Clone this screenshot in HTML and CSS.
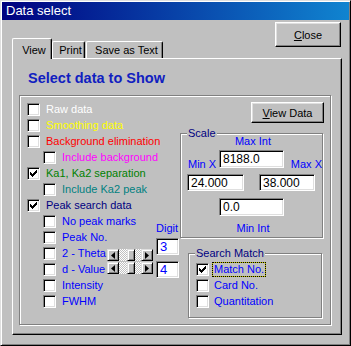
FILE: index.html
```html
<!DOCTYPE html>
<html lang="en">
<head>
  <meta charset="UTF-8">
  <title>Data select</title>
  <link rel="stylesheet" href="styles.css">
</head>
<body>

<div class="window">
  <div class="titlebar">Data select</div>

  <div class="client">
    <div class="head">
      <div class="tabs">
        <div class="tab tab-view active">View</div>
        <div class="tab tab-print">Print</div>
        <div class="tab tab-save">Save as Text</div>
      </div>
      <button class="btn close-btn"><u>C</u>lose</button>
    </div>

    <div class="panel">
      <h1 class="heading">Select data to Show</h1>

      <div class="group">
        <!-- left list of options -->
        <ul class="list">
          <li class="row"><span class="cb"></span><span class="c-white">Raw data</span></li>
          <li class="row"><span class="cb"></span><span class="c-yellow">Smoothing data</span></li>
          <li class="row"><span class="cb"></span><span class="c-red">Background elimination</span></li>
          <li class="row sub"><span class="cb"></span><span class="c-magenta">Include background</span></li>
          <li class="row"><span class="cb checked"><svg width="7" height="7" viewBox="0 0 7 7"><path d="M0 2h1v1h1v1h1V3h1V2h1V1h1V0h1v3H6v1H5v1H4v1H3v1H2V6H1V5H0z"/></svg></span><span class="c-green">Ka1, Ka2 separation</span></li>
          <li class="row sub"><span class="cb"></span><span class="c-teal">Include Ka2 peak</span></li>
          <li class="row"><span class="cb checked"><svg width="7" height="7" viewBox="0 0 7 7"><path d="M0 2h1v1h1v1h1V3h1V2h1V1h1V0h1v3H6v1H5v1H4v1H3v1H2V6H1V5H0z"/></svg></span><span class="c-navy">Peak search data</span></li>
          <li class="row sub"><span class="cb"></span><span class="c-blue">No peak marks</span></li>
          <li class="row sub"><span class="cb"></span><span class="c-blue">Peak No.</span></li>
          <li class="row sub"><span class="cb"></span><span class="c-blue">2 - Theta</span></li>
          <li class="row sub"><span class="cb"></span><span class="c-blue">d - Value</span></li>
          <li class="row sub"><span class="cb"></span><span class="c-blue">Intensity</span></li>
          <li class="row sub"><span class="cb"></span><span class="c-blue">FWHM</span></li>
        </ul>

        <!-- digit spinners for 2-Theta / d-Value -->
        <div class="digits">
          <div class="digit-label">Digit</div>
          <div class="spin spin-theta">
            <div class="hscroll">
              <span class="arr"><svg width="4" height="7" viewBox="0 0 4 7"><path d="M4 0v7L0 3.5z"/></svg></span>
              <span class="track t1"></span>
              <span class="thumb"></span>
              <span class="track t2"></span>
              <span class="arr"><svg width="4" height="7" viewBox="0 0 4 7"><path d="M0 0v7l4-3.5z"/></svg></span>
            </div>
            <input class="field digit" type="text" value="3">
          </div>
          <div class="spin spin-d">
            <div class="hscroll">
              <span class="arr"><svg width="4" height="7" viewBox="0 0 4 7"><path d="M4 0v7L0 3.5z"/></svg></span>
              <span class="track t1"></span>
              <span class="thumb"></span>
              <span class="track t2"></span>
              <span class="arr"><svg width="4" height="7" viewBox="0 0 4 7"><path d="M0 0v7l4-3.5z"/></svg></span>
            </div>
            <input class="field digit" type="text" value="4">
          </div>
        </div>

        <!-- right side: button, scale, search match -->
        <div class="side">
          <button class="btn view-btn"><u>V</u>iew Data</button>

          <div class="frame scale">
            <span class="legend">Scale</span>
            <div class="c-blue center-lbl">Max Int</div>
            <input class="field max-int" type="text" value="8188.0">
            <div class="x-labels c-blue"><span>Min X</span><span>Max X</span></div>
            <div class="x-inputs">
              <input class="field min-x" type="text" value="24.000">
              <input class="field max-x" type="text" value="38.000">
            </div>
            <input class="field min-int" type="text" value="0.0">
            <div class="c-blue center-lbl min-int-lbl">Min Int</div>
          </div>

          <div class="frame search">
            <span class="legend">Search Match</span>
            <ul class="list">
              <li class="row"><span class="cb checked"><svg width="7" height="7" viewBox="0 0 7 7"><path d="M0 2h1v1h1v1h1V3h1V2h1V1h1V0h1v3H6v1H5v1H4v1H3v1H2V6H1V5H0z"/></svg></span><span class="c-blue focus">Match No.</span></li>
              <li class="row"><span class="cb"></span><span class="c-blue nofocus">Card No.</span></li>
              <li class="row"><span class="cb"></span><span class="c-blue nofocus">Quantitation</span></li>
            </ul>
          </div>
        </div>
      </div>
    </div>
  </div>
</div>

</body>
</html>
```

FILE: styles.css
```css
body {
  margin: 0;
  background: #c0c0c0;
}
.window {
  width: 351px;
  height: 346px;
  box-sizing: border-box;
  background: #c0c0c0;
  border: 1px solid;
  border-color: #dfdfdf #000 #000 #dfdfdf;
  box-shadow: inset 1px 1px #fff, inset -1px -1px #808080;
  padding: 1px;
  font-family: "Liberation Sans", Arial, sans-serif;
  font-size: 11px;
}
.titlebar {
  height: 18px;
  line-height: 18px;
  padding-left: 4px;
  color: #fff;
  font-size: 13px;
  background: linear-gradient(to right, #000080, #1084d0);
}
.client {
  padding: 0 7px 0 10px;
}
.head {
  display: flex;
  justify-content: space-between;
  height: 38px;
}
.tabs {
  display: flex;
  align-items: flex-end;
  align-self: flex-end;
}
.tab {
  box-sizing: border-box;
  height: 17px;
  padding-top: 2px;
  padding-left: 4px;
  text-align: center;
  line-height: 13px;
  background: #c0c0c0;
  border-top: 1px solid #fff;
  border-left: 1px solid #fff;
  border-right: 1px solid #000;
  box-shadow: inset -1px 0 #808080;
  border-radius: 2px 2px 0 0;
}
.tab.active {
  position: relative;
  z-index: 1;
  height: 21px;
  padding-top: 5px;
  margin-bottom: -1px;
}
.tab-view { width: 40px; }
.tab-print { width: 33px; }
.tab-save { width: 77px; margin-left: 1px; }

.btn {
  box-sizing: border-box;
  font: inherit;
  color: #000;
  background: #c0c0c0;
  border: 1px solid;
  border-color: #fff #000 #000 #fff;
  box-shadow: inset -1px -1px #808080, inset 1px 1px #dfdfdf;
  padding: 0;
  text-align: center;
}
.close-btn {
  width: 66px;
  height: 25px;
  margin-top: 2px;
  margin-right: 1px;
}

.panel {
  box-sizing: border-box;
  height: 277px;
  border: 1px solid;
  border-color: #fff #000 #000 #fff;
  box-shadow: inset -1px -1px #808080;
  padding-left: 6px;
}
.heading {
  margin: 11px 0 0 9px;
  font-size: 14.5px;
  line-height: 17px;
  font-weight: bold;
  color: #1020c0;
}
.group {
  box-sizing: border-box;
  width: 312px;
  height: 230px;
  margin-top: 8px;
  border: 1px solid #808080;
  box-shadow: inset 1px 1px #fff, 1px 1px #fff;
  padding: 5px 0 0 7px;
  display: grid;
  grid-template-columns: 80px 73px 144px;
  align-items: start;
}
.list {
  list-style: none;
  margin: 0;
  padding: 0;
}
.group > .list {
  grid-column: 1 / 3;
  grid-row: 1;
}
.row {
  display: flex;
  align-items: center;
  height: 16px;
  white-space: nowrap;
}
.row.sub {
  padding-left: 16px;
}
.cb {
  box-sizing: border-box;
  width: 13px;
  height: 13px;
  flex: none;
  margin-right: 6px;
  background: #fff;
  border: 1px solid;
  border-color: #808080 #fff #fff #808080;
  box-shadow: inset 1px 1px #000, inset -1px -1px #dfdfdf;
  padding: 2px 0 0 2px;
}
.cb svg {
  display: block;
  fill: #000;
  shape-rendering: crispEdges;
}

.c-white { color: #fff; }
.c-yellow { color: #ffff00; }
.c-red { color: #ff0000; }
.c-magenta { color: #ff00ff; }
.c-green { color: #008000; }
.c-teal { color: #008080; }
.c-navy { color: #000080; }
.c-blue { color: #0000ff; }

.digits {
  grid-column: 2;
  grid-row: 1;
  position: relative;
}
.digit-label {
  margin: 121px 0 0 49px;
  line-height: 13px;
  color: #0000ff;
}
.spin {
  display: flex;
  align-items: flex-start;
  gap: 3px;
}
.spin-theta { margin-top: 3px; }
.spin-theta .hscroll { margin-top: 11px; }
.spin-d .hscroll { margin-top: 1px; }
.hscroll {
  display: flex;
  height: 12px;
  width: 46px;
}
.arr, .thumb {
  box-sizing: border-box;
  height: 12px;
  background: #c0c0c0;
  border: 1px solid;
  border-color: #dfdfdf #000 #000 #dfdfdf;
  box-shadow: inset 1px 1px #fff, inset -1px -1px #808080;
  display: flex;
  align-items: center;
  justify-content: center;
}
.arr { width: 12px; }
.arr svg { fill: #000; }
.thumb { width: 8px; }
.track {
  height: 12px;
  background: repeating-conic-gradient(#fff 0 25%, #c0c0c0 0 50%) 0 0 / 2px 2px;
}
.t1 { width: 8px; }
.t2 { width: 6px; }

.field {
  box-sizing: border-box;
  font: inherit;
  font-size: 12px;
  color: #000;
  background: #fff;
  border: 1px solid;
  border-color: #808080 #fff #fff #808080;
  box-shadow: inset 1px 1px #000, inset -1px -1px #dfdfdf;
  padding: 0 0 0 3px;
  margin: 0;
  outline: none;
  display: block;
}
.digit {
  width: 23px;
  height: 17px;
  font-size: 13px;
  color: #0000ff;
}

.side {
  grid-column: 3;
  grid-row: 1;
}
.view-btn {
  display: block;
  width: 73px;
  height: 21px;
  margin: 1px 0 0 71px;
}
.frame {
  position: relative;
  box-sizing: border-box;
  border: 1px solid #808080;
  box-shadow: inset 1px 1px #fff, 1px 1px #fff;
}
.legend {
  position: absolute;
  top: -8px;
  left: 6px;
  padding: 0 1px;
  line-height: 14px;
  background: #c0c0c0;
  color: #000080;
}
.scale {
  width: 143px;
  height: 105px;
  margin-top: 10px;
}
.center-lbl {
  text-align: center;
  line-height: 14px;
  padding-left: 3px;
}
.max-int, .min-int {
  width: 65px;
  height: 18px;
  margin-left: 38px;
}
.max-int { margin-top: 2px; }
.x-labels {
  display: flex;
  justify-content: space-between;
  margin-top: -11px;
  padding-left: 7px;
  line-height: 14px;
}
.x-inputs {
  display: flex;
  margin-top: 3px;
  padding-left: 6px;
  gap: 15px;
}
.min-x { width: 57px; height: 17px; }
.max-x { width: 56px; height: 17px; }
.min-int { margin-top: 7px; }
.min-int-lbl { margin-top: 5px; }

.search {
  width: 134px;
  height: 65px;
  margin: 15px 0 0 8px;
  padding: 7px 0 0 7px;
}
.search .cb { margin-right: 3px; }
.focus, .nofocus {
  line-height: 13px;
  padding: 0 1px;
  border: 1px dotted transparent;
}
.focus {
  border-color: #000;
  background: #c0c000;
  background: linear-gradient(#c0c0c0, #c0c0c0) padding-box, #c0c000;
}
```
